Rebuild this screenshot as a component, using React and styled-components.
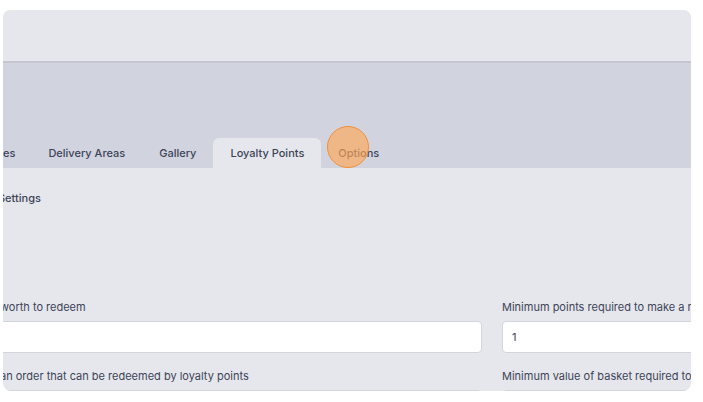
import styled, { createGlobalStyle } from "styled-components";

const GlobalStyle = createGlobalStyle`
  body {
    margin: 0;
    background: #ffffff;
    font-family: Inter, "Noto Sans", sans-serif;
    -webkit-font-smoothing: antialiased;
  }
`;

const Page = styled.div`
  position: relative;
  height: 402px;
  padding: 10px 12px 0 3px;
  box-sizing: border-box;
  overflow: hidden;
`;

const Card = styled.div`
  width: 688px;
  height: 381px;
  border-radius: 8px;
  overflow: hidden;
  background: #e6e7ec;
  display: flex;
  flex-direction: column;
`;

const TopBar = styled.div`
  height: 51px;
  flex-shrink: 0;
  background: #e6e7ec;
  border-bottom: 2px solid #c5c6d2;
`;

const TabStrip = styled.div`
  height: 105px;
  flex-shrink: 0;
  background: #d1d3df;
  display: flex;
  align-items: flex-end;
`;

const Tab = styled.div`
  height: 30px;
  line-height: 30px;
  padding: ${(p) => (p.$cut ? "0 16px 0 0" : "0 17px")};
  font-size: 11px;
  font-weight: 500;
  color: #3d4458;
  white-space: nowrap;
  border-radius: 6px 6px 0 0;
  background: ${(p) => (p.$active ? "#e6e7ec" : "transparent")};
`;

const Body = styled.div`
  padding-top: 23px;
`;

const SectionTitle = styled.div`
  font-size: 11px;
  font-weight: 500;
  line-height: 14px;
  color: #3d4458;
  text-indent: -5px;
`;

const Grid = styled.div`
  margin-top: 95px;
  display: grid;
  grid-template-columns: 479px 260px;
  column-gap: 20px;
  row-gap: 16px;
`;

const Field = styled.div`
  display: flex;
  flex-direction: column;
  gap: 7px;
`;

const Label = styled.div`
  font-size: 11px;
  font-weight: 400;
  line-height: 14px;
  color: #3d4458;
  white-space: nowrap;
  text-indent: ${(p) => (p.$cut ? "-3px" : "0")};
`;

const Input = styled.div`
  height: 32px;
  box-sizing: border-box;
  background: #ffffff;
  border: 1px solid #d3d5de;
  border-radius: 4px;
  display: flex;
  align-items: center;
  padding-left: 9px;
  font-size: 11px;
  color: #3d4458;
  margin-left: ${(p) => (p.$cut ? "-10px" : "0")};
`;

const Prefix = styled.div`
  width: 28px;
  height: 100%;
  margin-left: -9px;
  background: #d7d9e1;
  border-radius: 4px 0 0 4px;
`;

const Cursor = styled.div`
  position: absolute;
  left: 327px;
  top: 126px;
  width: 42px;
  height: 42px;
  box-sizing: border-box;
  border-radius: 50%;
  background: rgba(255, 168, 88, 0.66);
  border: 1.5px solid #f0913a;
`;

export default function App() {
  return (
    <Page>
      <GlobalStyle />
      <Card>
        <TopBar />
        <TabStrip>
          <Tab $cut>es</Tab>
          <Tab>Delivery Areas</Tab>
          <Tab>Gallery</Tab>
          <Tab $active>Loyalty Points</Tab>
          <Tab>Options</Tab>
        </TabStrip>
        <Body>
          <SectionTitle>Settings</SectionTitle>
          <Grid>
            <Field>
              <Label $cut>worth to redeem</Label>
              <Input $cut />
            </Field>
            <Field>
              <Label>Minimum points required to make a redemption</Label>
              <Input>1</Input>
            </Field>
            <Field>
              <Label $cut>an order that can be redeemed by loyalty points</Label>
              <Input $cut />
            </Field>
            <Field>
              <Label>Minimum value of basket required to redeem</Label>
              <Input>
                <Prefix />
              </Input>
            </Field>
          </Grid>
        </Body>
      </Card>
      <Cursor />
    </Page>
  );
}
